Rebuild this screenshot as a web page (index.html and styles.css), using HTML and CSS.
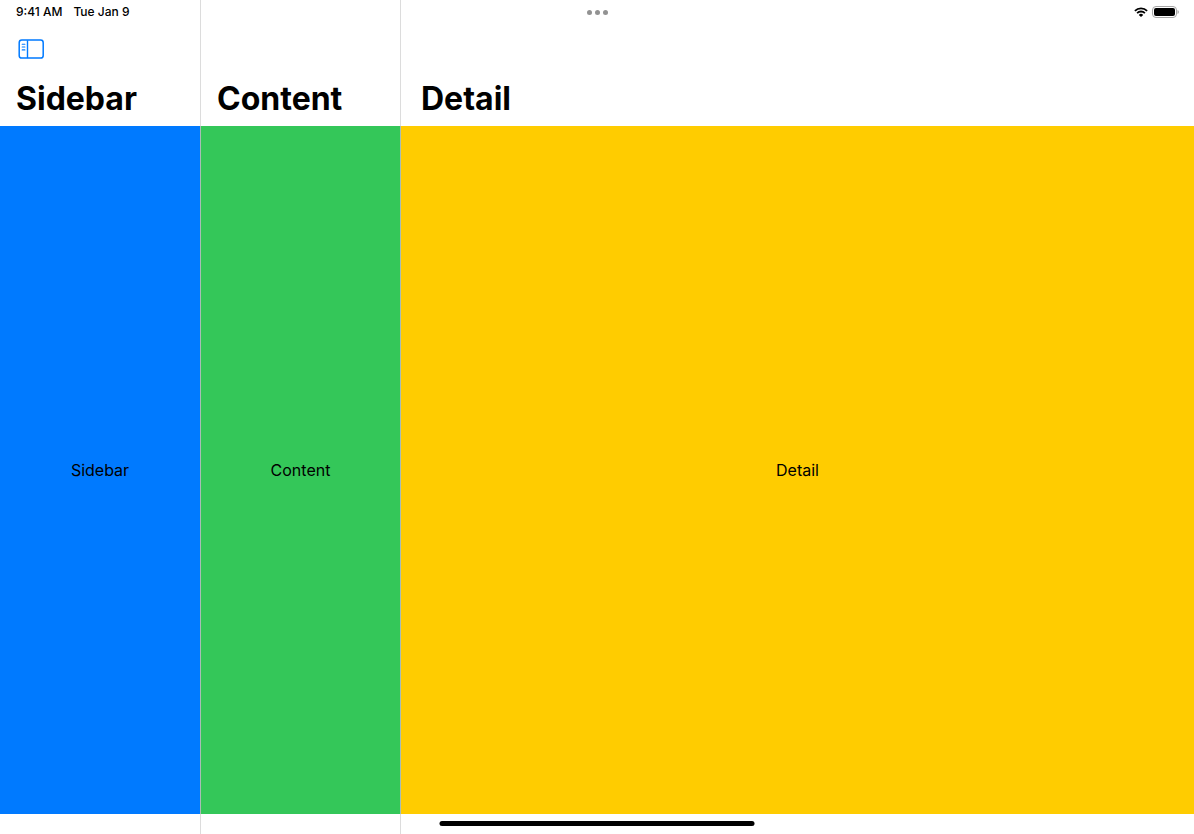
FILE: index.html
```html
<!DOCTYPE html>
<html lang="en">
<head>
	<meta charset="UTF-8">
	<meta name="viewport" content="width=device-width, initial-scale=1">
	<title>Sidebar, Content, Detail</title>
	<link rel="stylesheet" href="styles.css">
</head>
<body>
	<header class="status">
		<div class="clock">
			<span>9:41 AM</span>
			<span>Tue Jan 9</span>
		</div>
		<button class="dots" type="button" aria-label="Multitasking">
			<i></i><i></i><i></i>
		</button>
		<div class="indicators">
			<svg width="14" height="10" viewBox="0 0 14 10" aria-hidden="true">
				<path d="M.9 3.9a8.7 8.7 0 0 1 12.2 0M3.1 6.1a5.6 5.6 0 0 1 7.8 0" fill="none" stroke="#000" stroke-width="1.8"/>
				<path d="M7 10 4.8 7.9a3.1 3.1 0 0 1 4.4 0z"/>
			</svg>
			<svg width="27" height="12" viewBox="0 0 27 12" aria-hidden="true">
				<rect x="0.5" y="0.5" width="24" height="11" rx="3.5" fill="none" stroke="#a6a6a6"/>
				<rect x="2" y="2" width="21" height="8" rx="2"/>
				<path d="M25.5 4v4q1.4-.5 1.4-2t-1.4-2z" fill="#a6a6a6"/>
			</svg>
		</div>
	</header>
	<main class="split">
		<section class="column">
			<div class="navbar">
				<button class="toggle" type="button" aria-label="Toggle sidebar">
					<svg width="26" height="20" viewBox="0 0 26 20" fill="none" stroke="#007aff" aria-hidden="true">
						<rect x="1.2" y="1.1" width="24" height="18" rx="2.6" stroke-width="1.5"/>
						<path d="M9.5 1.3v17.8" stroke-width="1.4"/>
						<path d="M4.2 5.2h2.7M4.2 8h2.7M4.2 10.9h2.7" stroke-width="1.1" stroke-linecap="round"/>
					</svg>
				</button>
				<h1>Sidebar</h1>
			</div>
			<div class="pane blue">Sidebar</div>
		</section>
		<section class="column">
			<div class="navbar">
				<h1>Content</h1>
			</div>
			<div class="pane green">Content</div>
		</section>
		<section class="column detail">
			<div class="navbar">
				<h1>Detail</h1>
			</div>
			<div class="pane yellow">Detail</div>
		</section>
	</main>
	<div class="home"></div>
</body>
</html>
```

FILE: styles.css
```css
* {
	margin: 0;
	padding: 0;
	box-sizing: border-box;
}
body {
	min-height: 100vh;
	display: flex;
	background-color: #fff;
	color: #000;
	font-family: Inter, "Liberation Sans", sans-serif;
	font-size: 16px;
}
button {
	border: none;
	background: none;
}
svg {
	display: block;
}
/* status bar floats above the three columns */
.status {
	position: absolute;
	top: 0;
	left: 0;
	right: 0;
	height: 24px;
	padding: 0 15px 0 16px;
	display: grid;
	grid-template-columns: 1fr auto 1fr;
	align-items: center;
	font-size: 12px;
	line-height: 16px;
	font-weight: 500;
}
.clock {
	display: flex;
	gap: 11px;
}
.dots {
	display: flex;
	gap: 3px;
}
.dots i {
	width: 5px;
	height: 5px;
	border-radius: 50%;
	background-color: #929292;
}
.indicators {
	display: flex;
	justify-content: flex-end;
	align-items: center;
	gap: 4px;
}
.split {
	flex: 1;
	display: grid;
	grid-template-columns: 201px 200px 1fr;
}
.column {
	display: flex;
	flex-direction: column;
	padding-bottom: 20px;
	border-right: 1px solid #dcdcdc;
}
.detail {
	border-right: none;
}
.navbar {
	height: 126px;
	padding: 0 16px 7px;
	display: flex;
	flex-direction: column;
	justify-content: flex-end;
	align-items: flex-start;
	gap: 19px;
}
.detail .navbar {
	padding-left: 20px;
}
.toggle {
	margin-left: 2px;
}
h1 {
	font-size: 32px;
	line-height: 41px;
	font-weight: 700;
}
.pane {
	flex: 1;
	display: flex;
	justify-content: center;
	align-items: center;
}
/* the divider is darker where it crosses the coloured panes */
.blue,
.green {
	margin-right: -1px;
	border-right: 1px solid #a9bdb5;
}
.blue {
	background-color: #007aff;
}
.green {
	background-color: #34c759;
}
.yellow {
	background-color: #ffcc00;
}
.home {
	position: absolute;
	bottom: 8px;
	left: 50%;
	width: 315px;
	height: 5px;
	border-radius: 3px;
	background-color: #000;
	transform: translateX(-50%);
}
```
